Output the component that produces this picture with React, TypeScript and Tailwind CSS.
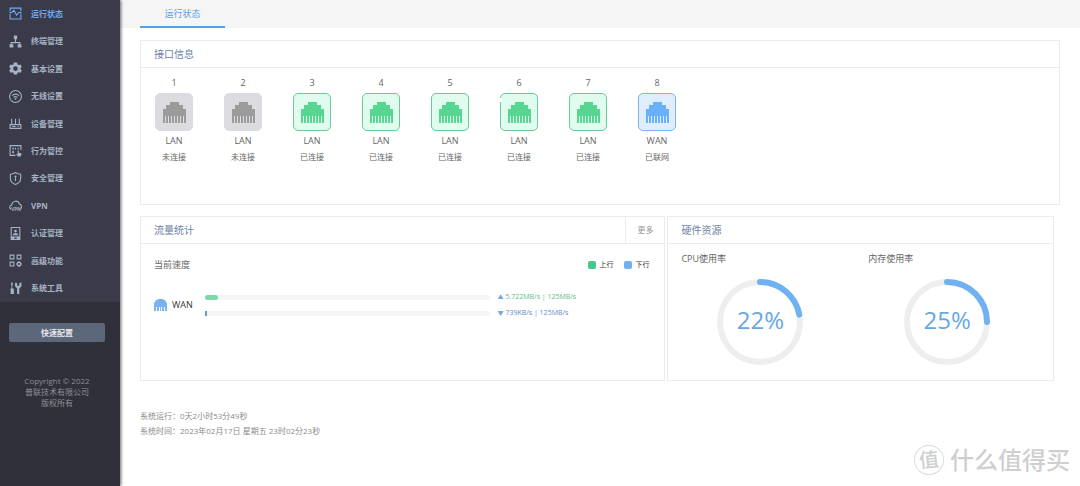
import type { ReactNode } from 'react'

interface NavItem {
    label: string;
    icon: ReactNode;
}

interface Port {
    id: number;
    type: 'LAN' | 'WAN';
    state: 'OFF' | 'ON' | 'ONLINE';
    active?: boolean;
}

const navItems: NavItem[] = [
    {
        label: '运行状态',
        icon: (
            <>
                <path d="M2 8V2h20v6M2 12v10h20V12" />
                <path d="M1 10h4l4-4 5 9 4-5h5" />
            </>
        ),
    },
    {
        label: '终端管理',
        icon: (
            <>
                <path d="M12 7v7M4 18v-4h16v4" />
                <path d="M9 1h6v7H9zM1 17h7v6H1zM16 17h7v6h-7z" fill="currentColor" stroke="none" />
            </>
        ),
    },
    {
        label: '基本设置',
        icon: (
            <path
                fill="currentColor"
                stroke="none"
                fillRule="evenodd"
                d="M9 1h6l.8 3.600 2 1.100L21.300 4.600l2.400 4.400-2.500 2.500v1.600l2.500 2.400-2.400 4.300-3.500-1-2 1.200L15 23H9l-.8-3-2-1.200-3.500 1L.3 15.500l2.500-2.400v-1.600L.3 9l2.400-4.400 3.500 1.100 2-1.100zM12 7.800a4.300 4.300 0 1 0 0 8.600 4.300 4.300 0 0 0 0-8.600z"
            />
        ),
    },
    {
        label: '无线设置',
        icon: (
            <>
                <circle cx="12" cy="12" r="11" />
                <path d="M5.500 10.500c4-3.500 9-3.500 13 0M8.500 13.500c2.300-1.800 4.700-1.800 7 0" />
                <circle cx="12" cy="16.500" r="1.600" fill="currentColor" stroke="none" />
            </>
        ),
    },
    {
        label: '设备管理',
        icon: (
            <>
                <path d="M2 14h20v7H2zM5 3v11M12 3v11M19 3v11" />
                <path d="M6 17.500h6M16 17.500h2" />
            </>
        ),
    },
    {
        label: '行为管控',
        icon: (
            <>
                <path d="M12 21H2V3h20v8" />
                <path d="M6 7h3v3H6zM11 7h2v3h-2zM16 7h2v3h-2zM6 13h3v4H6z" fill="currentColor" stroke="none" />
                <path d="M16 12h2v4l5 1v3l-2 3h-5l-3-5 3 1z" fill="currentColor" stroke="none" />
            </>
        ),
    },
    {
        label: '安全管理',
        icon: (
            <>
                <path d="M12 1c3 2 6 3 9.500 3v8c0 5-4 9-9.500 11-5.500-2-9.500-6-9.500-11V4C6 4 9 3 12 1z" />
                <path d="M12 10v7" />
                <circle cx="12" cy="8.500" r="2" fill="currentColor" stroke="none" />
            </>
        ),
    },
    {
        label: 'VPN',
        icon: (
            <>
                <path d="M4 19c-4-2-4-7 1-8 1-9 12-9 14-2 5 1 5 8 2 10" />
                <text x="4" y="22" fontSize="8.500" fontWeight="700" fill="currentColor" stroke="none">VPN</text>
            </>
        ),
    },
    {
        label: '认证管理',
        icon: (
            <>
                <path d="M4 1h16v22H4zM4 18.500h16" />
                <circle cx="12" cy="7.500" r="2.500" fill="currentColor" stroke="none" />
                <path d="M7 15c0-5 10-5 10 0zM4 18h6v4H4zM14 18h6v4h-6z" fill="currentColor" stroke="none" />
            </>
        ),
    },
    {
        label: '高级功能',
        icon: (
            <>
                <path d="M2 2h7v7H2zM15 2h7v7h-7zM2 15h7v7H2z" />
                <circle cx="18.500" cy="18.500" r="3" />
                <path d="M18.500 13v2M18.500 22v2M13 18.500h2M22 18.500h2M14.800 14.800l1 1M21.200 21.200l1 1M14.800 22.200l1-1M21.200 15.800l1-1" />
            </>
        ),
    },
    {
        label: '系统工具',
        icon: (
            <>
                <path d="M4 1h3v5l-1 1v5h3v10H3V12h1.500V7L4 6z" fill="currentColor" stroke="none" />
                <path d="M12 1l3 1v5h4V2l4-1v7l-4 4v10h-4V12l-4-4V3z" fill="currentColor" stroke="none" />
            </>
        ),
    },
];

const ports: Port[] = [
    { id: 1, type: 'LAN', state: 'OFF' },
    { id: 2, type: 'LAN', state: 'OFF' },
    { id: 3, type: 'LAN', state: 'ON' },
    { id: 4, type: 'LAN', state: 'ON' },
    { id: 5, type: 'LAN', state: 'ON' },
    { id: 6, type: 'LAN', state: 'ON', active: true },
    { id: 7, type: 'LAN', state: 'ON' },
    { id: 8, type: 'WAN', state: 'ONLINE' },
];

const portStyle = {
    OFF: { box: 'border-[#dcdce0] bg-[#dcdce0] text-[#9b9b9b]', text: '未连接' },
    ON: { box: 'border-[#6cc799] bg-[#e0fcee] text-[#56d690]', text: '已连接' },
    ONLINE: { box: 'border-[#82b4e8] bg-[#e0edfc] text-[#69b0fa]', text: '已联网' },
};

const usage = [
    { label: 'CPU使用率', value: 22 },
    { label: '内存使用率', value: 25 },
];

const PortIcon = () => (
    <svg viewBox="0 0 23 21" className="h-[21px] w-[23px]" fill="currentColor" aria-hidden="true">
        <path d="M7 0h9v3h4v4h3v14h-2v-7h-1v7h-2v-7h-1v7h-2v-7h-1v7h-2v-7h-1v7H9v-7H8v7H6v-7H5v7H3v-7H2v7H0V7h3V3h4z" />
    </svg>
);

const WanIcon = () => (
    <svg viewBox="0 0 13 12" className="h-3 w-[13px] text-[#78b2ef]" fill="currentColor" aria-hidden="true">
        <path d="M4 0h5l1 1h1l1 2 1 1v8h-2V8h-1v4H8V8H7v4H6V8H5v4H3V8H2v4H0V4l1-1 1-2h1z" />
    </svg>
);

const Ring = ({ value }: { value: number }) => {
    const length = 2 * Math.PI * 40;
    return (
        <div className="relative ml-9 size-[86px]">
            <svg viewBox="0 0 86 86" className="size-full -rotate-90" fill="none" strokeWidth="6" aria-hidden="true">
                <circle cx="43" cy="43" r="40" stroke="#eeeeee" />
                <circle
                    cx="43"
                    cy="43"
                    r="40"
                    stroke="#6fb1f1"
                    strokeLinecap="round"
                    strokeDasharray={`${(length * value) / 100} ${length}`}
                />
            </svg>
            <span className="absolute inset-0 flex items-center justify-center pb-1 text-2xl text-[#67a8e4]">
                {value}%
            </span>
        </div>
    );
};

const Sidebar = () => (
    <aside className="z-10 flex w-[120px] shrink-0 flex-col bg-[#30303a] shadow-[1px_0_3px_rgba(0,0,0,0.6)]">
        <nav className="grid h-[302px] auto-rows-fr bg-[#3a3a48]">
            {navItems.map((item, index) => (
                <a
                    key={item.label}
                    href="#"
                    className={`flex items-center gap-[9px] pl-[9px] text-[8px] leading-3 font-bold ${index === 0 ? 'text-[#6eaaf2]' : 'text-[#a5b3c4]'}`}
                >
                    <svg viewBox="0 0 24 24" className="size-[13px]" fill="none" stroke="currentColor" strokeWidth="2" aria-hidden="true">
                        {item.icon}
                    </svg>
                    {item.label}
                </a>
            ))}
        </nav>
        <div className="flex flex-col pt-[21px] pr-[15px] pl-[9px]">
            <button className="h-[19px] rounded-xs bg-[#5d677a] text-[8px] leading-3 font-bold text-[#e2e4e8]">快速配置</button>
            <p className="mt-[33px] text-center text-[8px] leading-[11px] text-[#8f8f96]">
                Copyright © 2022
                <br />
                普联技术有限公司
                <br />
                版权所有
            </p>
        </div>
    </aside>
);

const PanelHeader = ({ title, children }: { title: string; children?: ReactNode }) => (
    <div className="flex h-[27px] items-stretch justify-between border-b border-[#ececec] pl-[13px]">
        <h2 className="self-center text-[10px] leading-4 text-[#6d83a6]">{title}</h2>
        {children}
    </div>
);

const App = () => {
    return (
        <div className="relative flex min-h-screen bg-white font-['Open_Sans','Noto_Sans_CJK_SC',sans-serif]">
            <Sidebar />
            <main className="min-w-0 flex-1">
                <div className="h-7 bg-[#f5f5f5] pl-5">
                    <a href="#" className="flex h-full w-[85px] items-center justify-center border-b-2 border-[#5c9ee6] pt-0.5 text-[9px] leading-3 text-[#5c9ee6]">
                        运行状态
                    </a>
                </div>

                <div className="px-5 pt-3">
                    <section className="min-h-[165px] border border-[#ececec]">
                        <PanelHeader title="接口信息" />
                        <div className="flex gap-[31px] pt-[9px] pl-[14px]">
                            {ports.map((port) => (
                                <div key={port.id} className="flex w-[38px] flex-col items-center gap-1 text-[9px] leading-3 text-[#666]">
                                    <span>{port.id}</span>
                                    <div className={`relative flex size-[38px] items-center justify-center rounded-[5px] border ${portStyle[port.state].box}`}>
                                        <PortIcon />
                                        {port.active && <span className="absolute top-1 -left-px h-1 w-0.5 bg-white" />}
                                    </div>
                                    <span>{port.type}</span>
                                    <span className="text-[8px]">{portStyle[port.state].text}</span>
                                </div>
                            ))}
                        </div>
                    </section>

                    <div className="mt-[11px] mr-1.5 grid min-h-[165px] grid-cols-[526fr_387fr] gap-[2px]">
                        <section className="border border-[#ececec]">
                            <PanelHeader title="流量统计">
                                <a href="#" className="flex w-[39px] items-center justify-center border-l border-[#ececec] text-[8px] leading-3 text-[#999]">
                                    更多
                                </a>
                            </PanelHeader>
                            <div className="pr-[15px] pl-[13px]">
                                <div className="flex items-center pt-[15px] text-[7px] leading-3 text-[#333]">
                                    <h3 className="flex-1 text-[9px] text-[#666]">当前速度</h3>
                                    <span className="size-2 rounded-[2px] bg-[#46c78b]" />
                                    <span className="mr-[11px] ml-[3px]">上行</span>
                                    <span className="size-2 rounded-[2px] bg-[#6fb1f1]" />
                                    <span className="ml-[3px]">下行</span>
                                </div>
                                <div className="mt-5 flex items-center text-[9px] leading-3 text-[#333]">
                                    <WanIcon />
                                    <span className="w-[38px] pl-[5px]">WAN</span>
                                    <div className="flex flex-1 flex-col gap-1 text-[7px]">
                                        <div className="flex h-3 items-center">
                                            <div className="h-[5px] flex-1 rounded-xs bg-[#f5f5f5]">
                                                <div className="h-full rounded-full bg-[#78dba6]" style={{ width: '4.6%' }} />
                                            </div>
                                            <span className="w-[15px] pl-[7px] text-[6px] text-[#6fa9e4]">▲</span>
                                            <span className="w-[144px] text-[#61bd8c]">5.722MB/s | 125MB/s</span>
                                        </div>
                                        <div className="flex h-3 items-center">
                                            <div className="h-[5px] flex-1 rounded-xs bg-[#f5f5f5]">
                                                <div className="h-full bg-[#5d9fd2]" style={{ width: '0.6%' }} />
                                            </div>
                                            <span className="w-[15px] pl-[7px] text-[6px] text-[#6fa9e4]">▼</span>
                                            <span className="w-[144px] text-[#6389c8]">739KB/s | 125MB/s</span>
                                        </div>
                                    </div>
                                </div>
                            </div>
                        </section>

                        <section className="border border-[#ececec]">
                            <PanelHeader title="硬件资源" />
                            <div className="grid grid-cols-2 gap-0.5 pt-[9px] pl-[13px]">
                                {usage.map((u) => (
                                    <div key={u.label}>
                                        <h3 className="mb-[14px] text-[9px] leading-3 text-[#666]">{u.label}</h3>
                                        <Ring value={u.value} />
                                    </div>
                                ))}
                            </div>
                        </section>
                    </div>

                    <footer className="mt-[27px] text-[8px] leading-[15px] text-[#8a8a8a]">
                        <p>系统运行：0天2小时53分49秒</p>
                        <p>系统时间：2023年02月17日 星期五 23时02分23秒</p>
                    </footer>
                </div>
            </main>

            <div className="absolute right-2.5 bottom-2.5 flex items-center gap-1.5 text-[#cfcfcf]">
                <span className="flex size-[30px] -rotate-6 items-center justify-center rounded-full border border-[#dcdcdc] text-xl leading-none font-medium">
                    值
                </span>
                <span className="text-2xl leading-8 font-medium">什么值得买</span>
            </div>
        </div>
    )
}

export default App
